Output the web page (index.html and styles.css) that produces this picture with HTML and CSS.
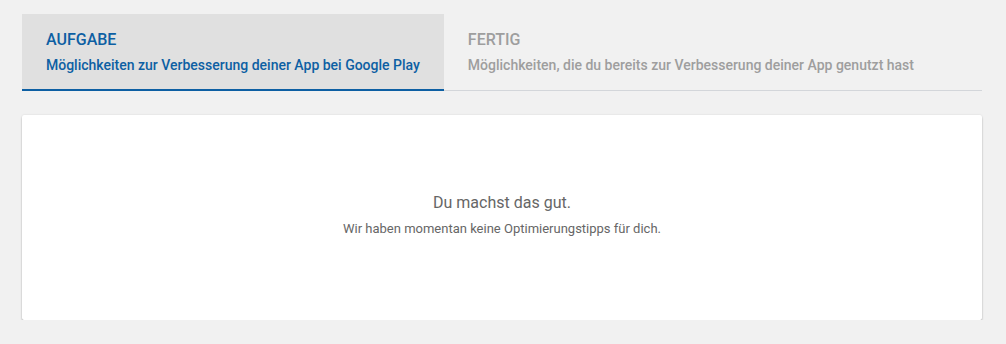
FILE: index.html
```html
<!DOCTYPE html>
<html>
<head>
  <title>Optimierungstipps</title>
  <link rel="stylesheet" href="styles.css">
</head>
<body>
  <div class="page">
    <div class="tabs">
      <div class="tab active">
        <div class="tab-title">AUFGABE</div>
        <div class="tab-sub">Möglichkeiten zur Verbesserung deiner App bei Google Play</div>
      </div>
      <div class="tab">
        <div class="tab-title">FERTIG</div>
        <div class="tab-sub">Möglichkeiten, die du bereits zur Verbesserung deiner App genutzt hast</div>
      </div>
    </div>

    <div class="card">
      <div class="empty-title">Du machst das gut.</div>
      <div class="empty-text">Wir haben momentan keine Optimierungstipps für dich.</div>
    </div>
  </div>
</body>
</html>
```

FILE: styles.css
```css
body {
  margin: 0;
  background-color: #f1f1f1;
  font-family: Roboto, "Liberation Sans", Arial, sans-serif;
}

.page {
  padding: 14px 24px 0 22px;
}

.tabs {
  display: flex;
  border-bottom: 1px solid #d3d6da;
}

.tab {
  padding: 15px 24px 14px 24px;
  border-bottom: 2px solid transparent;
  margin-bottom: -1px;
  color: #9e9e9e;
  font-weight: 500;
}

.tab.active {
  background-color: #e0e0e0;
  border-bottom-color: #0d5fa3;
  color: #0d5fa3;
}

.tab-title {
  font-size: 16px;
  line-height: 22px;
}

.tab-sub {
  font-size: 14px;
  line-height: 20px;
  margin-top: 4px;
}

.card {
  margin-top: 24px;
  background-color: #fff;
  height: 199px;
  padding-bottom: 6px;
  border-radius: 2px;
  box-shadow: 0 2px 2px rgba(0, 0, 0, 0.24), 0 0 2px rgba(0, 0, 0, 0.12);
  display: flex;
  flex-direction: column;
  align-items: center;
  justify-content: center;
  color: #666;
}

.empty-title {
  font-size: 16px;
  line-height: 22px;
}

.empty-text {
  font-size: 13px;
  line-height: 18px;
  margin-top: 6px;
}
```
